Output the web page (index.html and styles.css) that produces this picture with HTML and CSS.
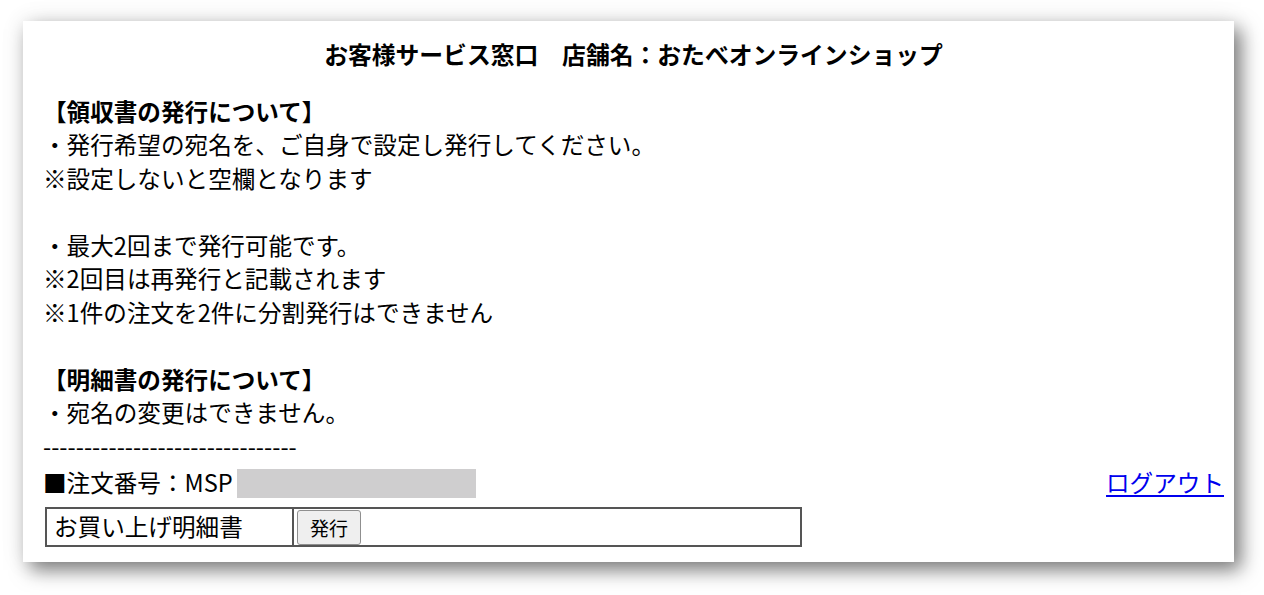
FILE: index.html
```html
<!DOCTYPE html>
<html lang="ja">
<head>
<meta charset="utf-8">
<title>お客様サービス窓口</title>
<link rel="stylesheet" href="styles.css">
</head>
<body>
<div class="card">
  <h1 class="title">お客様サービス窓口　店舗名：おたべオンラインショップ</h1>
  <div class="notes">
    <p class="head">【領収書の発行について】</p>
    <p>・発行希望の宛名を、ご自身で設定し発行してください。</p>
    <p>※設定しないと空欄となります</p>
    <p class="blank">&nbsp;</p>
    <p>・最大2回まで発行可能です。</p>
    <p>※2回目は再発行と記載されます</p>
    <p>※1件の注文を2件に分割発行はできません</p>
    <p class="blank">&nbsp;</p>
    <p class="head">【明細書の発行について】</p>
    <p>・宛名の変更はできません。</p>
    <p>-------------------------------</p>
  </div>
  <div class="order">
    <span class="order-label">■注文番号：MSP<span class="masked"></span></span>
    <a class="logout" href="#">ログアウト</a>
  </div>
  <table class="doc-table">
    <tr>
      <td class="doc-name">お買い上げ明細書</td>
      <td class="doc-action"><button class="issue-btn" type="button">発行</button></td>
    </tr>
  </table>
</div>
</body>
</html>
```

FILE: styles.css
```css
html, body {
  margin: 0;
  padding: 0;
  background: #ffffff;
}

body {
  font-family: "Noto Sans CJK JP", "Noto Sans", sans-serif;
  color: #000;
  font-size: 23.6px;
  line-height: 33.5px;
  min-height: 595px;
  padding-top: 21px;
  box-sizing: border-box;
}

.card {
  margin: 0 0 0 23px;
  width: 1211px;
  height: 541px;
  box-sizing: border-box;
  background: #fff;
  padding: 16px 10px 0 20px;
  box-shadow: 7px 8px 18px rgba(0, 0, 0, 0.5), 0 0 24px rgba(0, 0, 0, 0.08);
}

.title {
  margin: 0 0 24px 0;
  font-size: 23.8px;
  font-weight: 700;
  line-height: 33.5px;
  text-align: center;
}

.notes p {
  margin: 0;
  height: 33.5px;
  white-space: nowrap;
}

.notes .head {
  font-weight: 700;
}

.order {
  display: flex;
  align-items: center;
  justify-content: space-between;
  height: 34px;
  margin-top: 3px;
}

.order-label {
  display: flex;
  align-items: center;
}

.masked {
  display: inline-block;
  width: 239px;
  height: 29px;
  background: #cfcecf;
  margin-left: 4px;
}

.logout {
  color: #0000ee;
  text-decoration: underline;
  text-underline-offset: 3px;
}

.doc-table {
  margin: 7px 0 0 2px;
  border: 1px solid #555;
  border-spacing: 0;
  width: 757px;
}

.doc-table td {
  border: 1px solid #555;
  padding: 0;
  height: 35px;
}

.doc-name {
  width: 238px;
  padding: 0 0 0 7px !important;
  font-size: 23.6px;
}

.doc-action {
  padding: 1px 0 0 3px !important;
  vertical-align: middle;
}

.issue-btn {
  font-family: "Noto Sans CJK JP", sans-serif;
  font-size: 19px;
  height: 35px;
  padding: 0 12px;
  background: #efefef;
  border: 1px solid #8f8f8f;
  border-radius: 3px;
  color: #000;
  display: block;
}
```
